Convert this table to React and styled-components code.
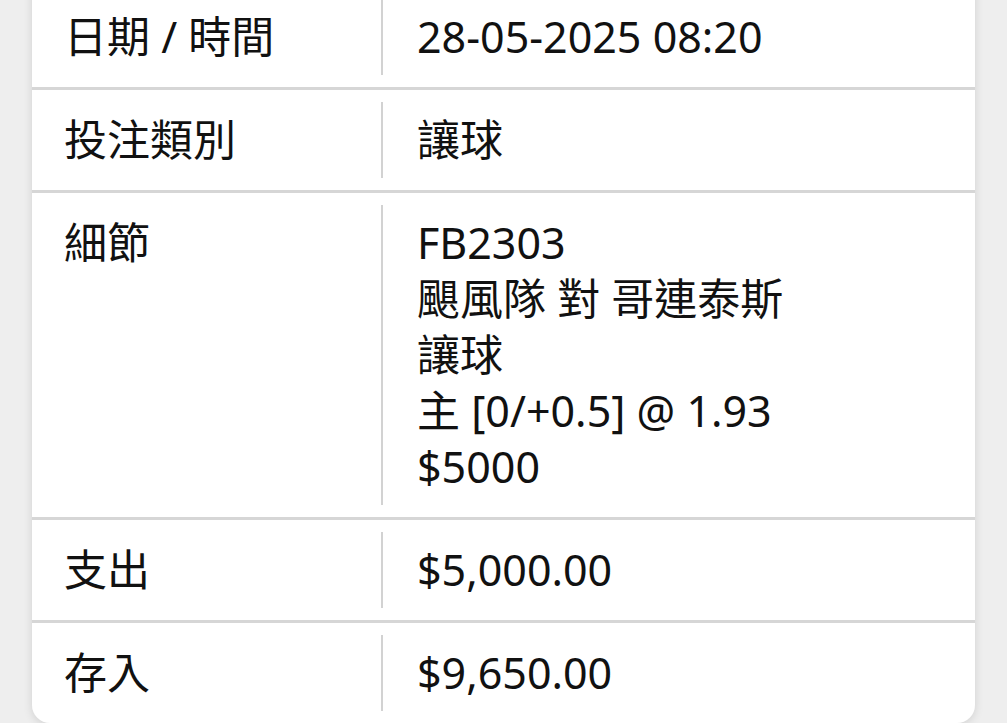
import React from "react";
import styled, { createGlobalStyle } from "styled-components";

const rows = [
  { label: "日期 / 時間", value: ["28-05-2025 08:20"] },
  { label: "投注類別", value: ["讓球"] },
  {
    label: "細節",
    value: ["FB2303", "颶風隊 對 哥連泰斯", "讓球", "主 [0/+0.5] @ 1.93", "$5000"],
  },
  { label: "支出", value: ["$5,000.00"] },
  { label: "存入", value: ["$9,650.00"] },
];

const GlobalStyle = createGlobalStyle`
  html, body {
    margin: 0;
    padding: 0;
    background: #eeeeee;
    overflow: hidden;
  }
  body {
    font-family: "Noto Sans", "Noto Sans CJK TC", sans-serif;
    color: #111111;
  }
`;

const Page = styled.div`
  width: 1007px;
  height: 723px;
  overflow: hidden;
  padding: 0 32px;
  box-sizing: border-box;
`;

// the top of the sheet is scrolled out of view
const Card = styled.div`
  margin-top: -13px;
  background: #ffffff;
  border-radius: 0 0 18px 18px;
  box-shadow: 0 2px 10px rgba(0, 0, 0, 0.12);
`;

const Row = styled.div`
  display: grid;
  grid-template-columns: 349px 1fr;
  border-top: ${(p) => (p.$first ? "none" : "3px solid #d6d6d6")};
`;

const Label = styled.div`
  padding: 22px 0 0 32px;
  font-size: 43px;
  line-height: 56px;
`;

const Value = styled.div`
  margin: 12px 0;
  padding: 10px 0 10px 34px;
  border-left: 2px solid #d2d2d2;
  font-size: 43px;
  line-height: 56px;
`;

const Line = styled.div`
  white-space: nowrap;
`;

export default function App() {
  return (
    <>
      <GlobalStyle />
      <Page>
        <Card>
          {rows.map((r, i) => (
            <Row key={r.label} $first={i === 0}>
              <Label>{r.label}</Label>
              <Value>
                {r.value.map((v) => (
                  <Line key={v}>{v}</Line>
                ))}
              </Value>
            </Row>
          ))}
        </Card>
      </Page>
    </>
  );
}
